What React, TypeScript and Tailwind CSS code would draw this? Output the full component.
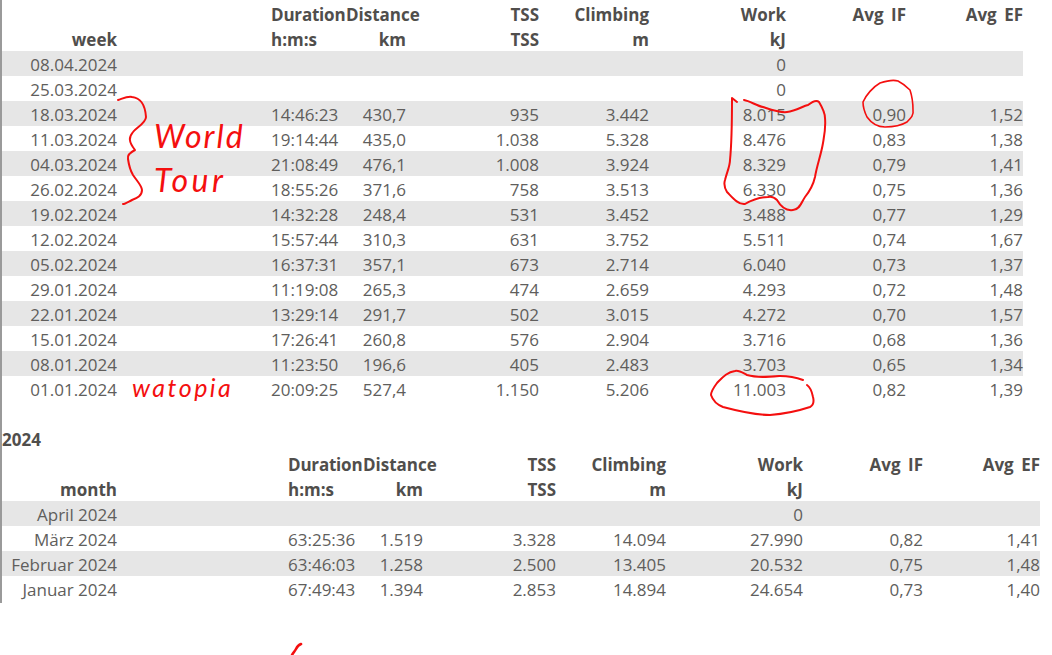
const weekRows = [
  ["08.04.2024", "", "", "", "", "0", "", ""],
  ["25.03.2024", "", "", "", "", "0", "", ""],
  ["18.03.2024", "14:46:23", "430,7", "935", "3.442", "8.015", "0,90", "1,52"],
  ["11.03.2024", "19:14:44", "435,0", "1.038", "5.328", "8.476", "0,83", "1,38"],
  ["04.03.2024", "21:08:49", "476,1", "1.008", "3.924", "8.329", "0,79", "1,41"],
  ["26.02.2024", "18:55:26", "371,6", "758", "3.513", "6.330", "0,75", "1,36"],
  ["19.02.2024", "14:32:28", "248,4", "531", "3.452", "3.488", "0,77", "1,29"],
  ["12.02.2024", "15:57:44", "310,3", "631", "3.752", "5.511", "0,74", "1,67"],
  ["05.02.2024", "16:37:31", "357,1", "673", "2.714", "6.040", "0,73", "1,37"],
  ["29.01.2024", "11:19:08", "265,3", "474", "2.659", "4.293", "0,72", "1,48"],
  ["22.01.2024", "13:29:14", "291,7", "502", "3.015", "4.272", "0,70", "1,57"],
  ["15.01.2024", "17:26:41", "260,8", "576", "2.904", "3.716", "0,68", "1,36"],
  ["08.01.2024", "11:23:50", "196,6", "405", "2.483", "3.703", "0,65", "1,34"],
  ["01.01.2024", "20:09:25", "527,4", "1.150", "5.206", "11.003", "0,82", "1,39"],
];

const monthRows = [
  ["April 2024", "", "", "", "", "0", "", ""],
  ["März 2024", "63:25:36", "1.519", "3.328", "14.094", "27.990", "0,82", "1,41"],
  ["Februar 2024", "63:46:03", "1.258", "2.500", "13.405", "20.532", "0,75", "1,48"],
  ["Januar 2024", "67:49:43", "1.394", "2.853", "14.894", "24.654", "0,73", "1,40"],
];

function Cells({ cells, spacer }: { cells: string[]; spacer: string }) {
  return (
    <>
      <div className="w-[115px] shrink-0 text-right whitespace-nowrap">{cells[0]}</div>
      <div className={spacer} />
      <div className="w-[76px] shrink-0 whitespace-nowrap">{cells[1]}</div>
      <div className="w-[59px] shrink-0 text-right whitespace-nowrap">{cells[2]}</div>
      <div className="w-[133px] shrink-0 text-right whitespace-nowrap">{cells[3]}</div>
      <div className="w-[110px] shrink-0 text-right whitespace-nowrap">{cells[4]}</div>
      <div className="w-[137px] shrink-0 text-right whitespace-nowrap">{cells[5]}</div>
      <div className="w-[120px] shrink-0 text-right whitespace-nowrap">{cells[6]}</div>
      <div className="w-[117px] shrink-0 text-right whitespace-nowrap">{cells[7]}</div>
    </>
  );
}

function Table({ label, rows, spacer, width }: { label: string; rows: string[][]; spacer: string; width: string }) {
  return (
    <div className={width}>
      <div className="flex h-[25px] items-center pt-[2px] font-bold text-[#504e4c]">
        <div className="w-[115px] shrink-0" />
        <div className={spacer} />
        <div className="w-[76px] shrink-0 tracking-[-0.2px]">Duration</div>
        <div className="-ml-px w-[60px] shrink-0 whitespace-nowrap">Distance</div>
        <div className="w-[133px] shrink-0 text-right">TSS</div>
        <div className="w-[110px] shrink-0 text-right">Climbing</div>
        <div className="w-[137px] shrink-0 text-right">Work</div>
        <div className="w-[120px] shrink-0 text-right [word-spacing:3px]">Avg IF</div>
        <div className="w-[117px] shrink-0 text-right [word-spacing:3px]">Avg EF</div>
      </div>
      <div className="flex h-[25px] items-center pt-[2px] font-bold text-[#504e4c]">
        <Cells cells={[label, "h:m:s", "km", "TSS", "m", "kJ", "", ""]} spacer={spacer} />
      </div>
      {rows.map((row, i) => (
        <div key={row[0]} className={`flex h-[25px] items-center pt-[2px] ${i % 2 === 0 ? "bg-[#e6e6e6]" : ""}`}>
          <Cells cells={row} spacer={spacer} />
        </div>
      ))}
    </div>
  );
}

function Ink() {
  return (
    <svg className="absolute left-0 top-0" width="1052" height="655" fill="none" stroke="#f40f0f" strokeWidth="2" strokeLinecap="round" strokeLinejoin="round">
      <path d="M118 100C124 98 128 96 132 97C140 98 145 103 146 117C146 123 136 128 133 132C129 137 128 141 135 150C131 152 127 155 128 159C129 166 130 170 133 175C137 181 142 186 142 190C142 196 137 198 132 200C128 202 125 204 123 204" />
      <path d="M744 100C750 101 757 106 763 107C772 110 780 113 787 112C796 111 803 106 808 105C813 101 817 100 819 102C822 107 825 112 825 118C826 128 824 137 823 143C821 155 817 165 815 177C813 186 809 192 805 197C802 201 800 210 793 210C786 211 781 207 777 200C774 197 772 196 768 197C760 197 752 200 745 204C738 205 732 197 727 192C724 187 724 183 725 180C727 172 730 166 730 160C732 140 732 118 732 98L737 102" />
      <path d="M898 81C892 79 886 81 880 83C873 87 866 95 863 102C863 108 865 113 867 117C872 124 877 127 885 127C893 127 902 125 907 122C911 118 914 115 913 110C913 103 912 96 910 90C906 86 902 83 898 81" strokeWidth="1.6" />
      <path d="M803 380C795 377 788 376 780 376C768 377 757 378 747 375C743 373 739 370 735 371C727 372 722 378 717 383C714 387 711 391 711 395C713 401 718 405 723 407C738 411 755 415 770 415C783 414 798 411 810 407C814 405 814 401 813 397C812 392 810 387 807 385" />
      <path d="M301 644C298 645 297 647 296 649C295 651 293 653 292 655" strokeWidth="2.6" />
    </svg>
  );
}

export default function App() {
  return (
    <div className="relative h-[655px] w-[1052px] overflow-hidden bg-white font-['Open_Sans','Liberation_Sans',sans-serif] text-[17px] text-[#605e5c]">
      <div className="h-[603px] overflow-hidden border-l-2 border-[#9a9a9a] pt-px">
        <Table label="week" rows={weekRows} spacer="w-[154px] shrink-0" width="w-[1021px]" />
        <div className="mt-[25px] flex h-[25px] items-center pt-[2px] font-bold text-[#504e4c]">2024</div>
        <Table label="month" rows={monthRows} spacer="w-[171px] shrink-0" width="w-[1038px]" />
      </div>
      <Ink />
      <span className="absolute left-[154px] top-[116px] font-['Lato',sans-serif] text-[32px] leading-[40px] font-normal tracking-[2px] text-[#f40f0f] italic">World</span>
      <span className="absolute left-[154px] top-[160px] font-['Lato',sans-serif] text-[32px] leading-[40px] font-normal tracking-[3.5px] text-[#f40f0f] italic">Tour</span>
      <span className="absolute left-[132px] top-[371px] font-['Lato',sans-serif] text-[25px] leading-[32px] font-normal tracking-[2.5px] text-[#f40f0f] italic">watopia</span>
    </div>
  );
}
